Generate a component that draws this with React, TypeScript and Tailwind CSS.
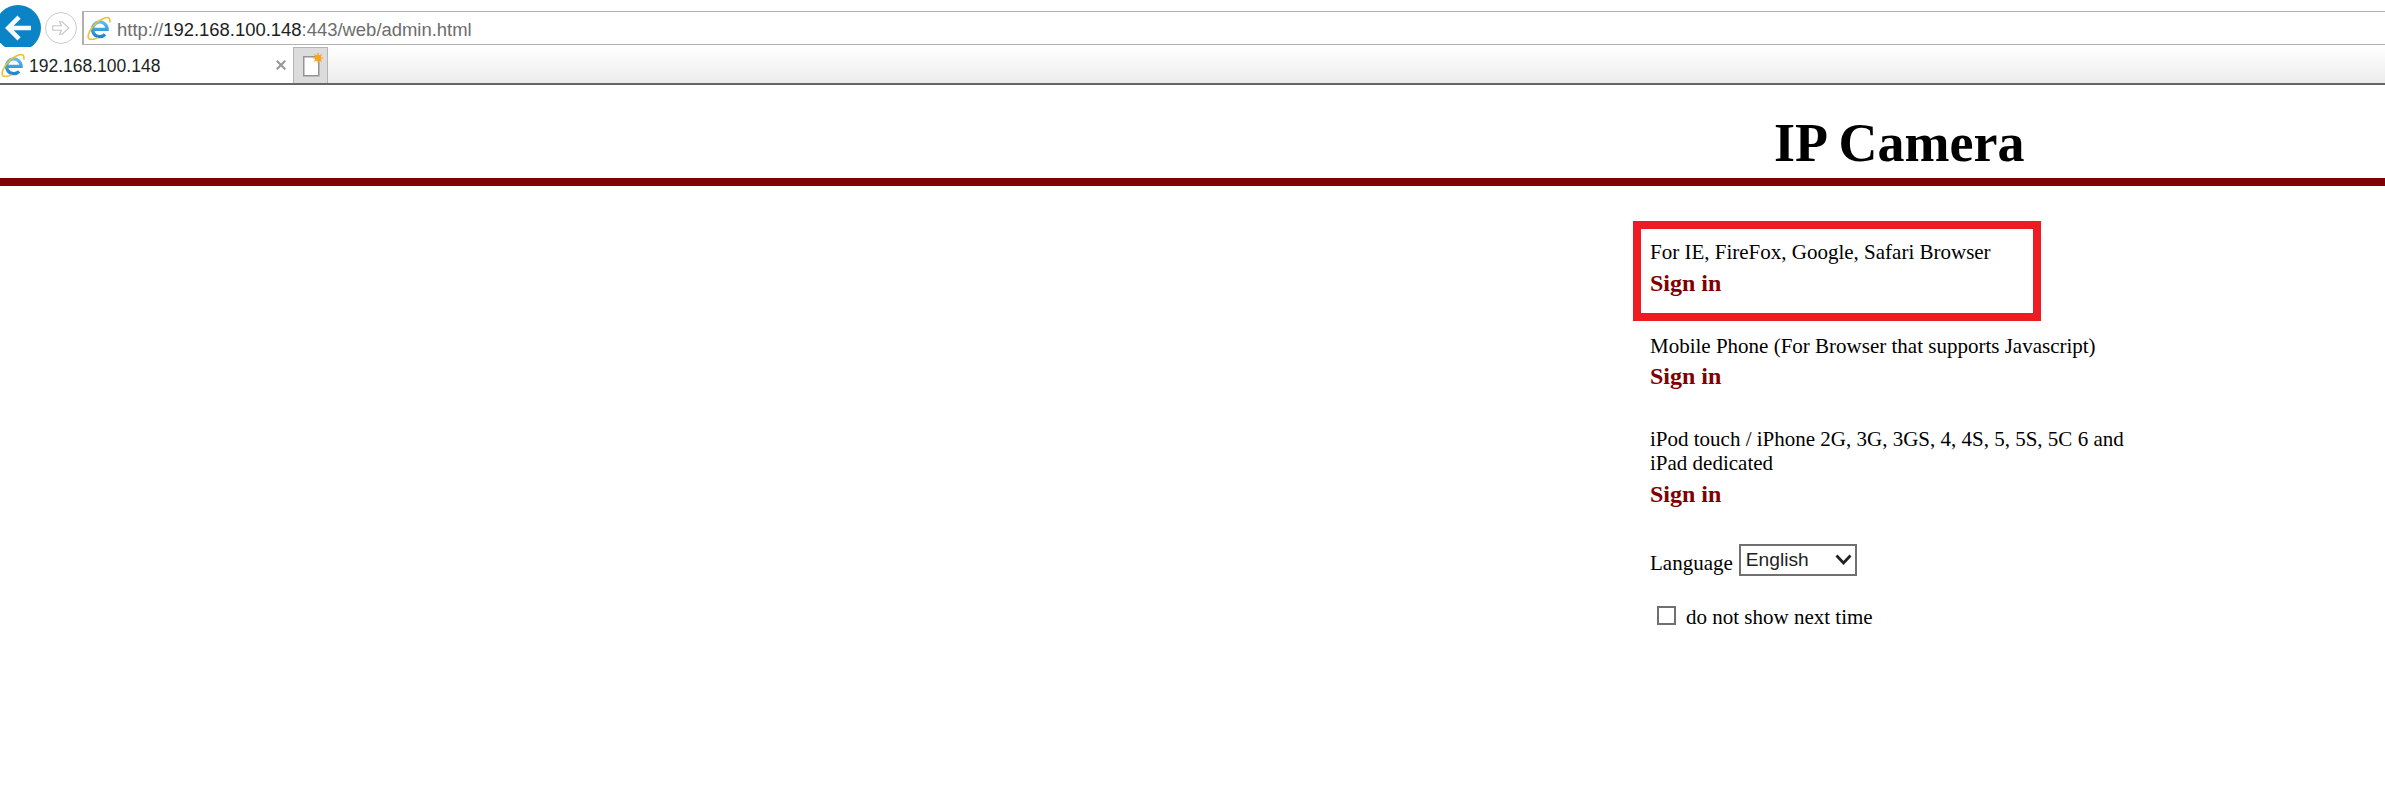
import React from "react";

function IeIcon() {
  return (
    <svg viewBox="0 0 24 24" className="h-[24px] w-[24px] shrink-0">
      <defs>
        <linearGradient id="ie-blue" x1="0" y1="0" x2="0" y2="1">
          <stop offset="0" stopColor="#5cbdf0" />
          <stop offset="1" stopColor="#1b87d2" />
        </linearGradient>
      </defs>
      <path
        d="M5.5 13.3h14.6a7.3 7.3 0 1 0-2 5"
        fill="none"
        stroke="url(#ie-blue)"
        strokeWidth="3.3"
      />
      <path
        d="M1.6 22.6C-0.5 18 7 6 17.5 2C21.5 0.6 23.6 2.2 22.8 6.5"
        fill="none"
        stroke="#f0bf2e"
        strokeWidth="1.6"
      />
      <path
        d="M1.6 22.6C3.5 24 8 23.4 11 21.6"
        fill="none"
        stroke="#f0bf2e"
        strokeWidth="1.6"
      />
    </svg>
  );
}

function BackButton() {
  return (
    <div className="-ml-[5px] mt-[5px] flex h-[46px] w-[46px] shrink-0 items-center justify-center rounded-full bg-[#0a84c6]">
      <svg viewBox="0 0 24 24" className="h-[26px] w-[26px]">
        <path
          d="M24 12H3.5M13 2L3 12L13 22"
          fill="none"
          stroke="#f4f9fc"
          strokeWidth="4.2"
        />
      </svg>
    </div>
  );
}

function ForwardButton() {
  return (
    <div className="ml-[4px] mt-[12px] flex h-[32px] w-[32px] shrink-0 items-center justify-center rounded-full border-[1.5px] border-[#cccccc] bg-white">
      <svg viewBox="0 0 18 14" className="h-[14px] w-[18px]">
        <path
          d="M0.7 4.7H9.5L7.5 0.8H10L17 7L10 13.2H7.5L9.5 9.3H0.7Z"
          fill="#fff"
          stroke="#c4c4c4"
          strokeWidth="1.1"
        />
      </svg>
    </div>
  );
}

function NewTabIcon() {
  return (
    <svg viewBox="0 0 26 28" className="h-[28px] w-[26px]">
      <rect x="5.75" y="4.75" width="15" height="19" fill="#fff" stroke="#939393" strokeWidth="1.5" />
      <circle cx="20" cy="6" r="3.2" fill="#f9a51a" />
      <path d="M20 0.8V11.2M14.8 6H25.2M16.3 2.3L23.7 9.7M23.7 2.3L16.3 9.7" stroke="#f9a51a" strokeWidth="1.1" />
    </svg>
  );
}

function SignIn({ className }: { className: string }) {
  return (
    <a className={`block text-[24px] font-bold leading-[32px] text-[#800000] ${className}`}>Sign in</a>
  );
}

export default function App() {
  return (
    <div className="relative h-[796px] overflow-hidden bg-white font-['Liberation_Serif',serif] text-black">
      {/* Browser chrome */}
      <div className="flex h-[47px] overflow-hidden">
        <BackButton />
        <ForwardButton />
        <div className="ml-[5px] mt-[11px] flex h-[34px] flex-grow items-center border-y border-l-2 border-[#b0b0b0] font-['Liberation_Sans',sans-serif] text-[18.45px]">
          <div className="ml-[3px] mr-[6px]">
            <IeIcon />
          </div>
          <div className="pt-[3px]">
            <span className="text-[#6d6d6d]">http://</span>
            <span className="text-[#1e1e1e]">192.168.100.148</span>
            <span className="text-[#6d6d6d]">:443/web/admin.html</span>
          </div>
        </div>
      </div>
      <div className="flex h-[38px] border-b-2 border-[#666] bg-linear-to-b from-white to-[#ececec]">
        <div className="flex w-[293px] items-center bg-white pl-[1px] font-['Liberation_Sans',sans-serif] text-[17.5px] text-[#1e1e1e]">
          <IeIcon />
          <span className="ml-[4px] flex-grow pt-[3px]">192.168.100.148</span>
          <svg viewBox="0 0 10 10" className="mr-[7px] h-[10px] w-[10px]">
            <path d="M0.7 0.7L9.3 9.3M9.3 0.7L0.7 9.3" stroke="#999" strokeWidth="2.2" />
          </svg>
        </div>
        <div className="flex w-[35px] items-center justify-center border-x border-t border-[#b4b4b4] bg-[#dcdcdc]">
          <NewTabIcon />
        </div>
      </div>

      {/* Page header */}
      <div className="flex h-[101px] items-end border-b-8 border-[#800000] pb-[5px] pl-[1774px]">
        <h1 className="text-[54px] font-bold leading-[60px]">IP Camera</h1>
      </div>

      {/* Login options */}
      <div className="pl-[1650px] pt-[54px] text-[21px] leading-[24px]">
        <div>For IE, FireFox, Google, Safari Browser</div>
        <SignIn className="mt-[3px]" />
        <div className="mt-[35px]">Mobile Phone (For Browser that supports Javascript)</div>
        <SignIn className="mt-[2px]" />
        <div className="mt-[35px] w-[490px]">
          iPod touch / iPhone 2G, 3G, 3GS, 4, 4S, 5, 5S, 5C 6 and iPad dedicated
        </div>
        <SignIn className="mt-[3px]" />
        <div className="mt-[34px] flex items-start">
          <span className="mt-[7px]">Language</span>
          <div className="relative ml-[6px] h-[32px] w-[118px]">
            <select className="h-full w-full appearance-none rounded-none border-2 border-[#707070] bg-white pl-[5px] font-['Liberation_Sans',sans-serif] text-[19.2px] text-[#222]">
              <option>English</option>
            </select>
            <svg viewBox="0 0 17 11" className="pointer-events-none absolute right-[5px] top-[10px] h-[11px] w-[17px]">
              <path d="M1.5 1.5L8.5 9L15.5 1.5" fill="none" stroke="#222" strokeWidth="2.8" />
            </svg>
          </div>
        </div>
        <label className="mt-[29px] flex items-start">
          <input
            type="checkbox"
            className="ml-[7px] mt-[1px] h-[19px] w-[19px] appearance-none border-2 border-[#707070] bg-white"
          />
          <span className="ml-[10px]">do not show next time</span>
        </label>
      </div>

      {/* Annotation drawn over the screenshot */}
      <div className="absolute left-[1633px] top-[221px] h-[100px] w-[408px] border-8 border-[#ed1c24]" />
    </div>
  );
}
